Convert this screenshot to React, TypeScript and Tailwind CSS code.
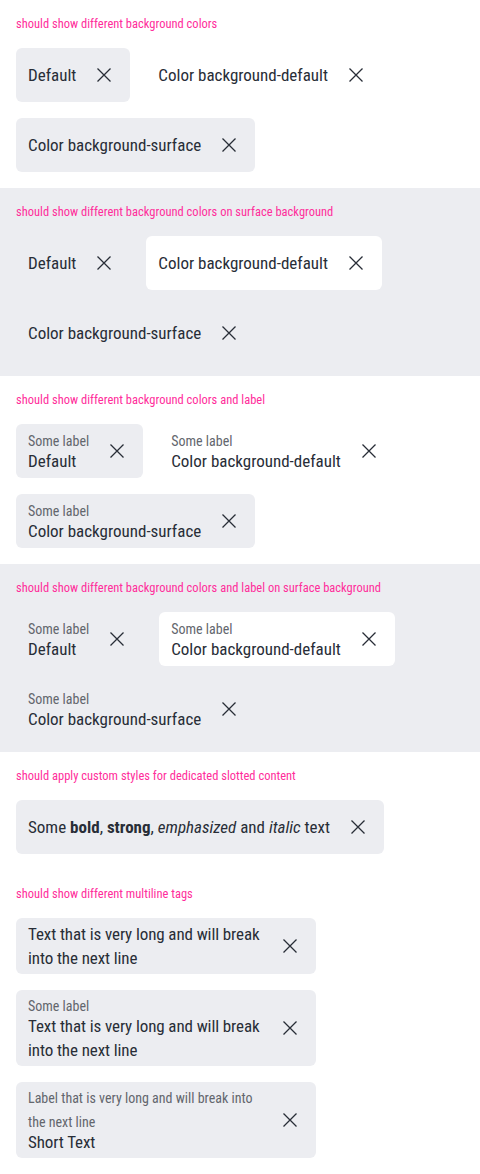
import type { ReactNode } from 'react';

type Variant = 'default' | 'plain' | 'white';

function CloseIcon() {
  return (
    <svg width="16" height="16" viewBox="0 0 16 16" fill="none" stroke="currentColor" strokeWidth={1.3}>
      <path d="M1.5 1.5l13 13M14.5 1.5l-13 13" />
    </svg>
  );
}

function Tag({
  variant = 'default',
  label,
  tight,
  children,
}: {
  variant?: Variant;
  label?: string;
  tight?: boolean;
  children: ReactNode;
}) {
  const bg = variant === 'default' ? 'bg-[#ecedf1]' : variant === 'white' ? 'bg-white' : 'bg-transparent';
  return (
    <div className={`flex items-center gap-1.5 rounded-md py-1 pl-3 pr-1 text-[#282d37] ${bg}`}>
      <div className="flex min-w-0 flex-col">
        {label && <span className="-mb-1 text-[14px] leading-6 text-[#63666d]">{label}</span>}
        <span className={`text-[17px] leading-6 ${tight ? 'tracking-[-0.1px]' : ''}`}>{children}</span>
      </div>
      <button className="flex h-[46px] w-11 shrink-0 items-center justify-center text-[#282d37]">
        <CloseIcon />
      </button>
    </div>
  );
}

function Section({ title, surface, children }: { title: string; surface?: boolean; children: ReactNode }) {
  return (
    <section className={`flex flex-col gap-4 p-4 ${surface ? 'bg-[#ecedf1]' : 'bg-white'}`}>
      <h2 className="text-[12.5px] leading-4 text-[#ff2d9b]">{title}</h2>
      <div className="flex flex-wrap items-start gap-4">{children}</div>
    </section>
  );
}

export default function App() {
  return (
    <div className="min-h-screen bg-white" style={{ fontFamily: '"Roboto Condensed", Roboto, sans-serif' }}>
      <Section title="should show different background colors">
        <Tag>Default</Tag>
        <Tag variant="plain">Color background-default</Tag>
        <Tag>Color background-surface</Tag>
      </Section>

      <Section title="should show different background colors on surface background" surface>
        <Tag variant="plain">Default</Tag>
        <Tag variant="white">Color background-default</Tag>
        <Tag variant="plain">Color background-surface</Tag>
      </Section>

      <Section title="should show different background colors and label">
        <Tag label="Some label">Default</Tag>
        <Tag variant="plain" label="Some label">Color background-default</Tag>
        <Tag label="Some label">Color background-surface</Tag>
      </Section>

      <Section title="should show different background colors and label on surface background" surface>
        <Tag variant="plain" label="Some label">Default</Tag>
        <Tag variant="white" label="Some label">Color background-default</Tag>
        <Tag variant="plain" label="Some label">Color background-surface</Tag>
      </Section>

      <Section title="should apply custom styles for dedicated slotted content">
        <Tag>
          Some <b className="font-bold">bold</b>, <strong className="font-bold">strong</strong>, <em className="italic">emphasized</em> and{' '}
          <i className="italic">italic</i> text
        </Tag>
      </Section>

      <section className="flex flex-col gap-4 p-4">
        <h2 className="text-[12.5px] leading-4 text-[#ff2d9b]">should show different multiline tags</h2>
        <div className="flex w-[300px] flex-col gap-4">
          <Tag tight>Text that is very long and will break into the next line</Tag>
          <Tag tight label="Some label">Text that is very long and will break into the next line</Tag>
          <Tag tight label="Label that is very long and will break into the next line">Short Text</Tag>
        </div>
      </section>
    </div>
  );
}
